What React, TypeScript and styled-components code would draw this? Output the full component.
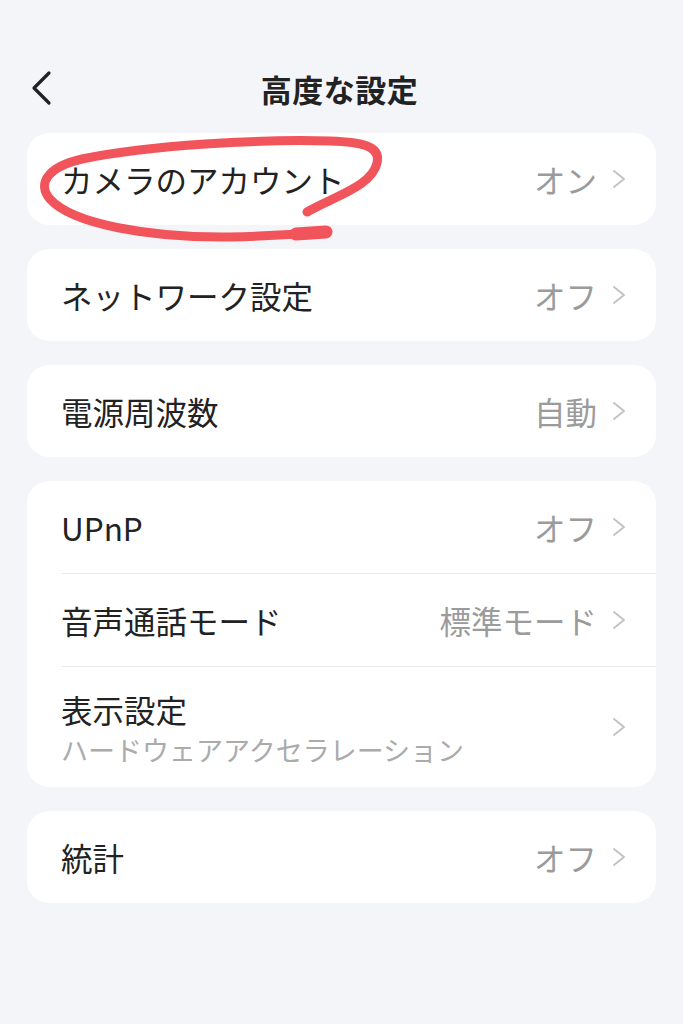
import React from "react";
import styled, { createGlobalStyle } from "styled-components";

const GlobalStyle = createGlobalStyle`
  html, body {
    margin: 0;
    padding: 0;
    background: #f4f5f9;
  }
  body {
    font-family: "Noto Sans CJK JP", "Noto Sans", sans-serif;
    color: #222222;
  }
`;

const Page = styled.div`
  position: relative;
  width: 683px;
  min-height: 1024px;
  background: #f4f5f9;
  padding-top: 60px;
  box-sizing: border-box;
`;

const Header = styled.header`
  display: grid;
  grid-template-columns: 1fr auto 1fr;
  align-items: center;
  height: 56px;
`;

const BackButton = styled.button`
  justify-self: start;
  display: flex;
  align-items: center;
  background: none;
  border: none;
  padding: 0 0 0 30px;
  margin: 0;
  cursor: pointer;
  color: #222222;
`;

const Title = styled.h1`
  margin: 0;
  font-size: 31px;
  font-weight: 700;
  letter-spacing: 0.5px;
  color: #222222;
  transform: translateX(-2px);
`;

const List = styled.div`
  display: flex;
  flex-direction: column;
  gap: 24px;
  padding: 17px 27px 0;
`;

const Card = styled.section`
  background: #ffffff;
  border-radius: 22px;
  overflow: hidden;
`;

const Row = styled.div<{ $height: number; $divider: boolean }>`
  display: flex;
  align-items: center;
  margin-left: 34px;
  padding-right: 29px;
  height: ${(p) => p.$height}px;
  box-sizing: border-box;
  border-top: ${(p) => (p.$divider ? "1px solid #ebebed" : "none")};
`;

const LabelBlock = styled.div<{ $withSub: boolean }>`
  flex: 1;
  display: flex;
  flex-direction: column;
  gap: 3px;
  min-width: 0;
  padding-top: ${(p) => (p.$withSub ? "3px" : "0")};
`;

const Label = styled.span`
  font-size: 31.5px;
  line-height: 40px;
  font-weight: 400;
  color: #222222;
`;

const Sub = styled.span`
  font-size: 27px;
  line-height: 36px;
  color: #ababab;
  font-weight: 400;
`;

const Value = styled.span`
  font-size: 31.5px;
  line-height: 40px;
  color: #9b9b9b;
  margin-right: 14px;
`;

const Chevron = () => (
  <svg width="16" height="20" viewBox="0 0 16 20" fill="none">
    <path
      d="M3 2 L13 10 L3 18"
      stroke="#c2c2c2"
      strokeWidth="1.9"
      strokeLinecap="round"
      strokeLinejoin="round"
    />
  </svg>
);

const Annotation = styled.svg`
  position: absolute;
  top: 0;
  left: 0;
  pointer-events: none;
`;

type Item = { label: string; value?: string; sub?: string };

const groups: Item[][] = [
  [{ label: "カメラのアカウント", value: "オン" }],
  [{ label: "ネットワーク設定", value: "オフ" }],
  [{ label: "電源周波数", value: "自動" }],
  [
    { label: "UPnP", value: "オフ" },
    { label: "音声通話モード", value: "標準モード" },
    { label: "表示設定", sub: "ハードウェアアクセラレーション" },
  ],
  [{ label: "統計", value: "オフ" }],
];

export default function App() {
  return (
    <>
      <GlobalStyle />
      <Page>
        <Header>
          <BackButton aria-label="back">
            <svg width="24" height="36" viewBox="0 0 24 36" fill="none">
              <path
                d="M19 3 L4 18 L19 33"
                stroke="#222222"
                strokeWidth="3.2"
                strokeLinecap="round"
                strokeLinejoin="round"
              />
            </svg>
          </BackButton>
          <Title>高度な設定</Title>
          <div />
        </Header>
        <List>
          {groups.map((g, gi) => (
            <Card key={gi}>
              {g.map((it, i) => (
                <Row
                  key={i}
                  $divider={i > 0}
                  $height={it.sub ? 121 : i > 0 ? 93 : 92}
                >
                  <LabelBlock $withSub={!!it.sub}>
                    <Label>{it.label}</Label>
                    {it.sub && <Sub>{it.sub}</Sub>}
                  </LabelBlock>
                  {it.value && <Value>{it.value}</Value>}
                  <Chevron />
                </Row>
              ))}
            </Card>
          ))}
        </List>
        <Annotation width="683" height="260" viewBox="0 0 683 260">
          <path
            d="M307 212 C335 196, 372 186, 377 163 C381 146, 362 142, 330 141 C260 139, 150 145, 82 159 C47 167, 37 184, 50 199 C72 224, 150 238, 230 237 C270 236, 300 234, 326 232"
            stroke="#f2545b"
            strokeWidth="9"
            strokeLinecap="round"
            strokeLinejoin="round"
            fill="none"
          />
          <path
            d="M296 234 L326 232"
            stroke="#f2545b"
            strokeWidth="13"
            strokeLinecap="round"
            fill="none"
          />
        </Annotation>
      </Page>
    </>
  );
}
